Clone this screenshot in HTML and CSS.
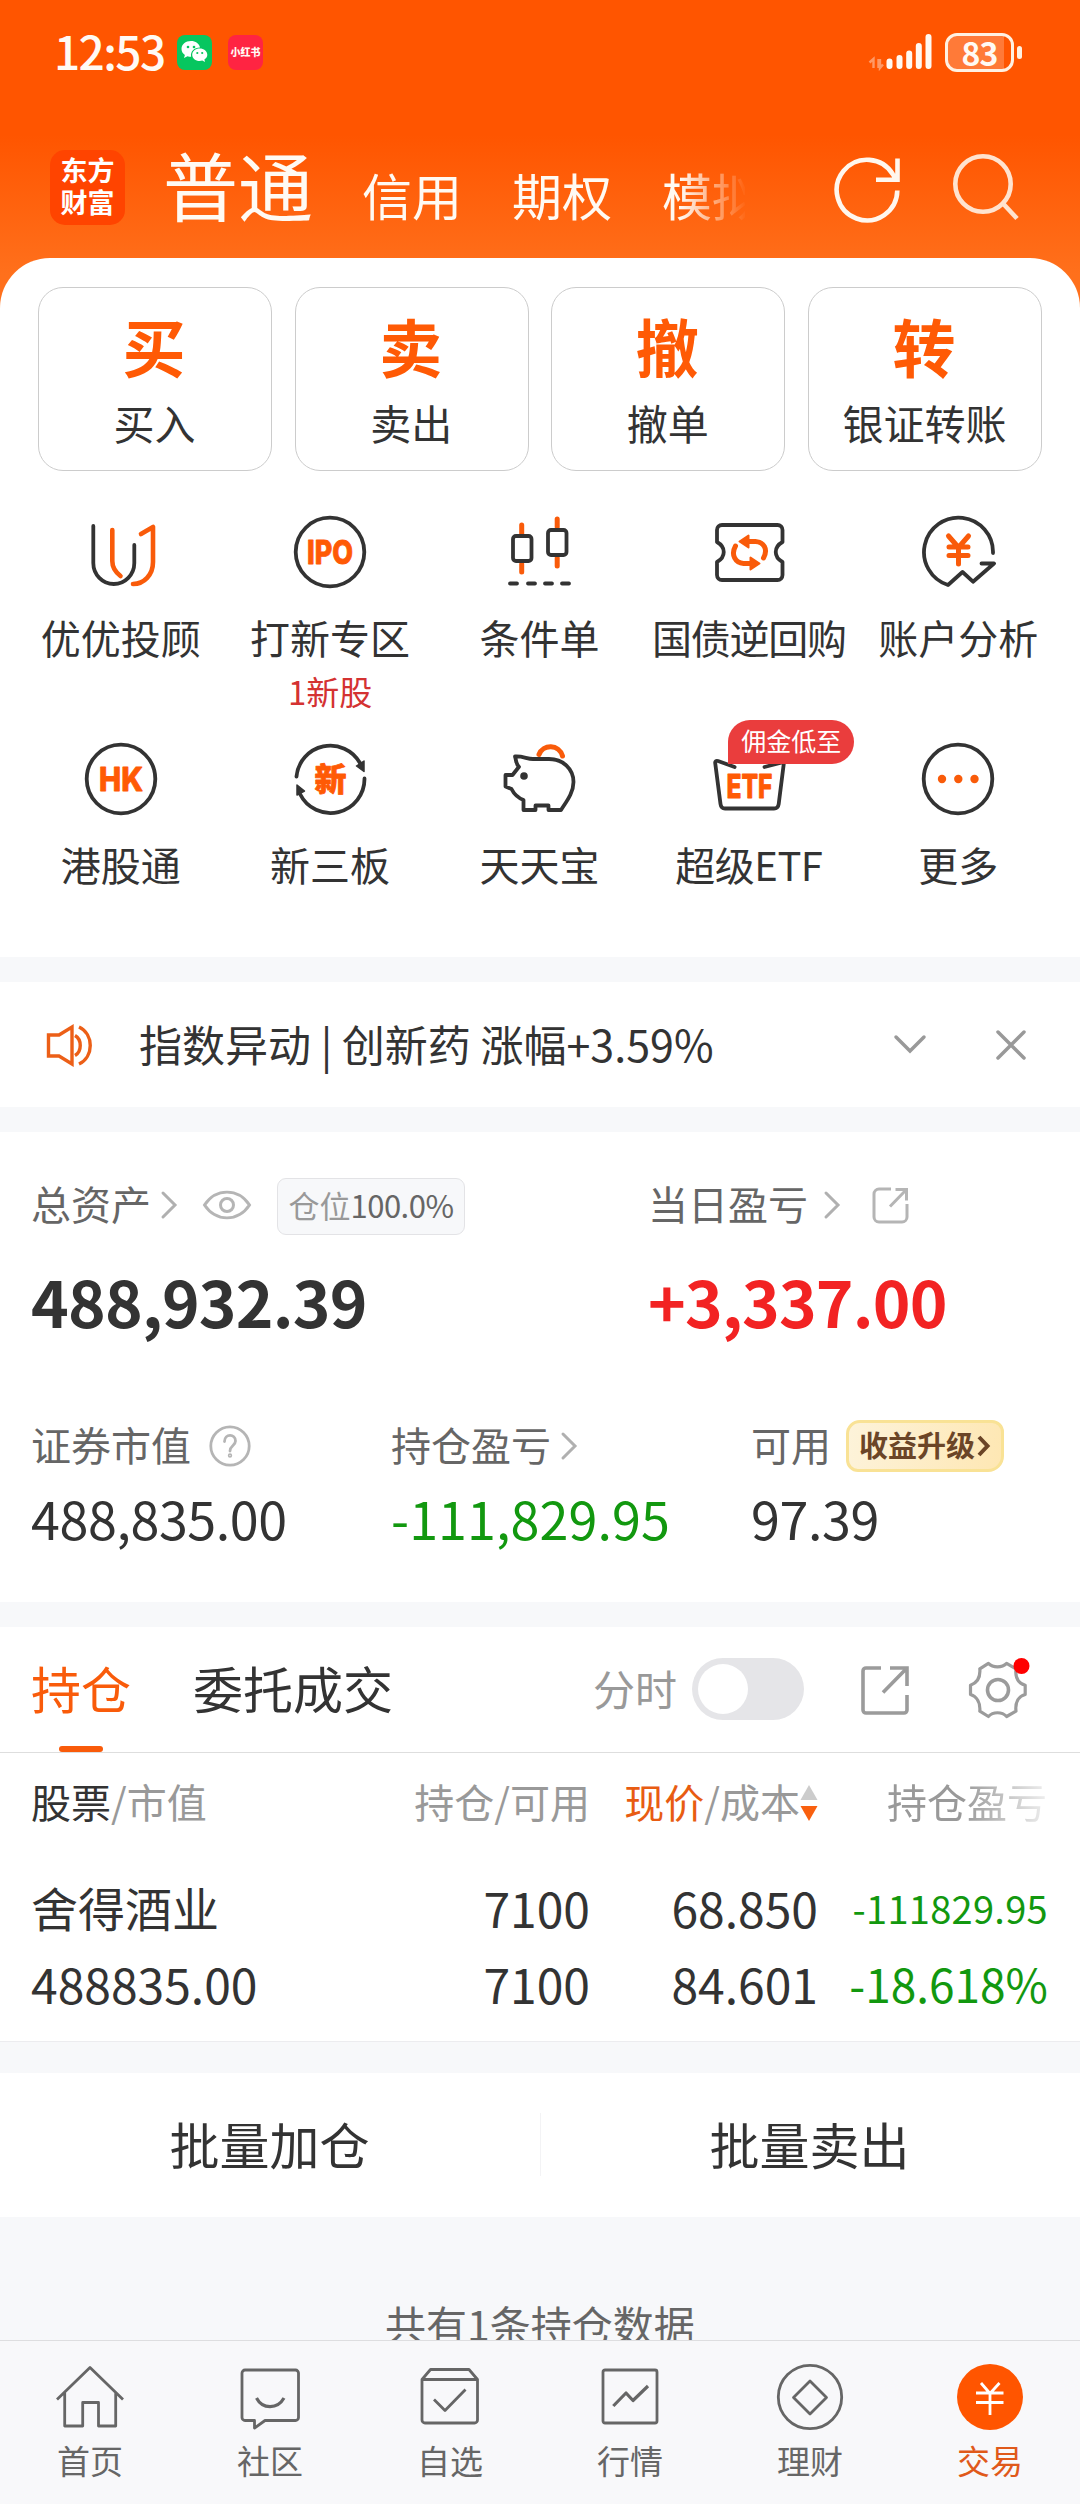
FILE: index.html
```html
<!DOCTYPE html>
<html lang="zh-CN">
<head>
<meta charset="utf-8">
<title>交易</title>
<link rel="stylesheet" href="styles.css">
</head>
<body>
<div class="top">
  <div class="status">
    <span class="t clock">12:53</span>
    <span class="app wechat"><svg width="27" height="22" viewBox="0 0 27 22"><path fill="#fff" d="M10 0C4.500 0 .5 3.500.5 8c0 2.500 1.300 4.600 3.400 6L3 17l3.500-1.800c1.200.4 2.300.5 3.600.5-1-5 3-9.200 8.900-9.200C18.200 2.600 14.500 0 10 0z"/><path fill="#fff" d="M18.700 7.500c-4.200 0-7.500 2.700-7.500 6.200s3.300 6.300 7.500 6.300c.9 0 1.800-.2 2.600-.4L24 21l-.6-2.500c1.800-1.200 2.900-2.900 2.900-4.800 0-3.500-3.400-6.200-7.600-6.200z"/><g fill="#07c65f"><circle cx="7" cy="6" r="1.300"/><circle cx="13" cy="6" r="1.300"/><circle cx="16.300" cy="12" r="1.100"/><circle cx="21.200" cy="12" r="1.100"/></g></svg></span>
    <span class="app xhs"><span class="t">小红书</span></span>
    <svg class="signal" width="66" height="38" viewBox="0 0 66 38"><g stroke="#ffffff" stroke-opacity=".4" stroke-width="2.400" fill="none"><path d="M6.500 35V26L2.500 29.500M11.500 26v9M13 26v9l3-3.500"/></g><g stroke="#fff9f2" stroke-width="6" stroke-linecap="round"><path d="M22.500 28.500v4.500M32.500 25v8M42.200 20.500v12.500M51.800 13v20M61.500 4v29"/></g></svg>
    <span class="battery"><span class="level"></span><span class="t">83</span></span><span class="knob"></span>
  </div>
  <div class="nav">
    <div class="logo"><span>东方</span><span>财富</span></div>
    <div class="markets"><span class="cur">普通</span><span>信用</span><span>期权</span><span>模拟</span></div>
    <svg class="refresh" width="72" height="72" viewBox="0 0 72 72" fill="none" stroke="#fff7ee" stroke-width="4.600"><path d="M66.300 37.500A30.300 30.300 0 1 1 62 21.500l4 6M66.500 5.500v21.300H45"/></svg>
    <svg class="search" width="72" height="72" viewBox="0 0 72 72" fill="none" stroke="#ffe3cf" stroke-width="4.600"><circle cx="34" cy="31" r="27.700"/><path d="M54 50.500L68 65.500"/></svg>
  </div>
  <div class="sheet">
    <div class="cards">
      <div class="card"><b>买</b><span>买入</span></div>
      <div class="card"><b>卖</b><span>卖出</span></div>
      <div class="card"><b>撤</b><span>撤单</span></div>
      <div class="card"><b>转</b><span>银证转账</span></div>
    </div>
    <div class="tools">
      <div class="tool"><svg viewBox="0 0 76 76"><path class="o" d="M29.300 16v31c0 7 3 11 8.200 15M58 20l12-7v35c0 13-9 22-20 22"/><path class="k" d="M10.300 12v37a20.500 21 0 0 0 41 0V31"/></svg><span class="t">优优投顾</span></div>
      <div class="tool"><svg viewBox="0 0 76 76"><circle class="k" cx="38" cy="38" r="34.300"/><text x="38" y="50" textLength="46" lengthAdjust="spacingAndGlyphs">IPO</text></svg><span class="t">打新专区</span><span class="t sub">1新股</span></div>
      <div class="tool"><svg viewBox="0 0 76 76"><path class="o w" d="M20.700 11v9M20.700 50v8M56.200 5v8M56.200 44v8"/><rect class="k" x="12" y="22" width="18.500" height="25" rx="3"/><rect class="k" x="47" y="16" width="18.500" height="25" rx="3"/><path class="k" d="M9 69.500h7M27 69.500h7M44 69.500h7M61 69.500h7"/></svg><span class="t">条件单</span></div>
      <div class="tool"><svg viewBox="0 0 76 76"><path class="k" d="M11 11h55.500a5 5 0 0 1 5 5v12c-9 5-9 15 0 20v13a5 5 0 0 1-5 5H11a5 5 0 0 1-5-5V48c9-5 9-15 0-20V16a5 5 0 0 1 5-5z"/><path class="o w" d="M24.500 32c-5 9 0 17 8 17.500h8M52.500 44c5-9 0-16-8-16.500h-8"/><path fill="#f95b0a" stroke="#f95b0a" stroke-width="2" stroke-linejoin="round" d="M28.500 27.500l9-6v12zM48.500 49.500l-9-6v12z"/></svg><span class="t tight">国债逆回购</span></div>
      <div class="tool"><svg viewBox="0 0 76 76"><path class="k" d="M73 39A34.500 34.500 0 1 0 28 71l14.500-13L53 67.700l21-18.200H61.500"/><path class="o w" d="M28.500 22l10 11.500 10-11.500M38.500 33.500v16.500M29 33h19M29 41.500h19"/></svg><span class="t">账户分析</span></div>
      <div class="tool"><svg viewBox="0 0 76 76"><circle class="k" cx="38" cy="38" r="34.300"/><text x="38" y="50" textLength="44" lengthAdjust="spacingAndGlyphs">HK</text></svg><span class="t">港股通</span></div>
      <div class="tool"><svg viewBox="0 0 76 76"><path class="k" d="M4.500 35.500A34 34 0 0 1 68 22M72.500 37.500A34 34 0 0 1 8 53"/><path fill="#333" stroke="#333" stroke-width="1.500" stroke-linejoin="round" d="M72 20v10.500l-7.500-5.500zM5 44v10l7.500-4z"/><text class="han" x="38.500" y="50">新</text></svg><span class="t">新三板</span></div>
      <div class="tool"><svg viewBox="0 0 76 76"><path class="o w" d="M38 13.500C42 3 58 3 61.500 15"/><path class="k" d="M14 15.500c1.500 4 .5 7 4 10.300L11.500 34H4.500v11.500l6 2.500c3 6 7 9 12 11v10h12v-4.500h13v4.500H60c5-8 12.500-17 12.500-28C72.500 28 62 18 48 18H32c-6 0-10-3-18-2.500z"/><circle cx="23" cy="35" r="3.800" fill="#333"/></svg><span class="t">天天宝</span></div>
      <div class="tool"><svg viewBox="0 0 76 76"><path class="k" d="M23.600 26L7 20c-2-.6-3 .3-2.800 2l5.300 41c.4 3 1.500 4.500 4.500 4.500h49c3 0 4.300-1.500 4.700-4.500L73 21l-19.500 5"/><text x="38.500" y="57" textLength="46" lengthAdjust="spacingAndGlyphs">ETF</text></svg><span class="t etf">超级ETF</span><span class="badge"><span class="t">佣金低至</span></span></div>
      <div class="tool"><svg viewBox="0 0 76 76"><circle class="k" cx="38" cy="38" r="34.300"/><g fill="#f95b0a"><circle cx="22" cy="38" r="4.200"/><circle cx="38.300" cy="38" r="4.200"/><circle cx="54.500" cy="38" r="4.200"/></g></svg><span class="t">更多</span></div>
    </div>
  </div>
</div>

<div class="notice">
  <svg width="50" height="44" viewBox="0 0 50 44" fill="none" stroke="#ec5f17" stroke-width="3.400"><path d="M3.500 12H14L27 4v37L14 33H3.500zM30 12.500c7 4 7 16 0 20M34 4c15 7 15 30 0 37"/></svg>
  <span class="t">指数异动 | 创新药 涨幅+3.59%</span>
  <svg class="down" width="36" height="36" viewBox="0 0 36 36"><path d="M4 10l14 14 14-14"/></svg>
  <svg class="close" width="36" height="36" viewBox="0 0 36 36"><path d="M5 5l26 26M31 5L5 31"/></svg>
</div>

<div class="assets">
  <div class="two labels">
    <div><span class="t">总资产</span><svg class="go" viewBox="0 0 20 30"><path d="M3 3l12 12L3 27"/></svg><svg class="eye" width="50" height="36" viewBox="0 0 50 36" fill="none" stroke="#b5b5b5" stroke-width="3"><path d="M2.500 18C14-1 36-1 47.500 18 36 37 14 37 2.500 18z" transform="translate(0 1.800) scale(1 .9)"/><circle cx="25" cy="18" r="6.500"/></svg><span class="pos"><span class="t">仓位<em>100.0%</em></span></span></div>
    <div><span class="t">当日盈亏</span><svg class="go far" viewBox="0 0 20 30"><path d="M3 3l12 12L3 27"/></svg><svg class="share" width="38" height="38" viewBox="0 0 38 38" fill="none" stroke="#b5b5b5" stroke-width="3"><path d="M20 3H8a5 5 0 0 0-5 5v23a5 5 0 0 0 5 5h23a5 5 0 0 0 5-5V18M19 20.500L35 4M24.500 3.500h11v11"/></svg></div>
  </div>
  <div class="two totals"><div><span class="t">488,932.39</span></div><div><span class="t up">+3,337.00</span></div></div>
  <div class="three labels second">
    <div><span class="t">证券市值</span><svg class="help" width="44" height="44" viewBox="0 0 44 44" fill="none" stroke="#b5b5b5" stroke-width="2.800"><circle cx="22" cy="22" r="19.200"/><path d="M16.500 17.500c0-8 11-8 11-.5 0 4.500-5.500 4.500-5.500 10" stroke-linecap="round"/><circle cx="22" cy="31.500" r=".8"/></svg></div>
    <div><span class="t">持仓盈亏</span><svg class="go" viewBox="0 0 20 30"><path d="M3 3l12 12L3 27"/></svg></div>
    <div><span class="t">可用</span><span class="gold"><span class="t">收益升级</span><svg width="14" height="22" viewBox="0 0 14 22" fill="none" stroke="#6b4527" stroke-width="4"><path d="M2 2l8.500 9L2 20"/></svg></span></div>
  </div>
  <div class="three values"><div><span class="t">488,835.00</span></div><div><span class="t down-num loss">-111,829.95</span></div><div><span class="t">97.39</span></div></div>
</div>

<div class="holdings">
  <div class="tabs">
    <span class="tab on"><span class="t">持仓</span></span>
    <span class="tab"><span class="t">委托成交</span></span>
    <span class="t mode">分时</span>
    <span class="toggle"><i></i></span>
    <svg class="export" width="52" height="52" viewBox="0 0 52 52" fill="none" stroke="#9b9b9b" stroke-width="3.600"><path d="M22 4H7a3 3 0 0 0-3 3v39a3 3 0 0 0 3 3h38a3 3 0 0 0 3-3V31M24 28.500L47 5M31 4h17v18"/></svg>
    <svg class="gear" width="64" height="64" viewBox="0 0 64 64"><g fill="none" stroke="#9b9b9b" stroke-linejoin="round"><path stroke-width="3.200" d="M22.400 5.300C27 10 36 10 40.600 5.300L50 10.800C49 19 52 25 59.200 27.200V36.500C52 38.500 49 45 50 53.200L40.600 58.500C36 53.500 27 53.500 22.400 58.500L13.800 53.200C14.500 45 11 38.500 4.500 36.500V27.200C11 25 14.500 19 13.800 10.800z"/><circle cx="32" cy="32" r="10.500" stroke-width="3.600"/></g><circle cx="55.500" cy="8" r="8" fill="#f00"/></svg>
  </div>
  <div class="grid head">
    <span class="t"><em>股票</em>/市值</span>
    <span class="t">持仓/可用</span>
    <span class="price"><span class="t"><em>现价</em>/成本</span><svg width="18" height="38" viewBox="0 0 18 38"><path fill="#ccc" d="M9 1l8.500 15H.5z"/><path fill="#f9600f" d="M9 37l8.500-15H.5z"/></svg></span>
    <span class="t fade">持仓盈亏</span>
  </div>
  <div class="grid row first"><span class="t name">舍得酒业</span><span class="t">7100</span><span class="t">68.850</span><span class="t small down-num">-111829.95</span></div>
  <div class="grid row"><span class="t">488835.00</span><span class="t">7100</span><span class="t">84.601</span><span class="t pct down-num">-18.618%</span></div>
</div>

<div class="actions"><div><span class="t">批量加仓</span></div><div><span class="t">批量卖出</span></div></div>
<div class="note"><span>共有1条持仓数据</span></div>

<div class="bar">
  <div><svg viewBox="0 0 72 72"><path d="M3 38.500L36 6.500l33 32M10.700 31v34h18V41.500h15.800V65h17.200V31"/></svg><span>首页</span></div>
  <div><svg viewBox="0 0 72 72"><path d="M20.500 59.500H11a3 3 0 0 1-3-3V12a3 3 0 0 1 3-3h50.500a3 3 0 0 1 3 3v44.500a3 3 0 0 1-3 3H31L20.500 67z"/><path d="M22.500 37c6 11.500 21 11.500 27.500 0" stroke-width="3.200"/></svg><span>社区</span></div>
  <div><svg viewBox="0 0 72 72"><path d="M8 18.500L16.500 8.500h38.500l8.500 10V59a3 3 0 0 1-3 3H11a3 3 0 0 1-3-3zM8 18.500h55.500M20 38.500l11 11 20.500-21"/></svg><span>自选</span></div>
  <div><svg viewBox="0 0 72 72"><rect x="9" y="9" width="54" height="53" rx="2"/><path d="M19.300 45L32 32l7 7.500L54 25" stroke-width="3.200"/></svg><span>行情</span></div>
  <div><svg viewBox="0 0 72 72"><circle cx="36" cy="36" r="31.700"/><path d="M36 20l16.500 16.500L36 53 19.500 36.500z"/></svg><span>理财</span></div>
  <div class="on"><svg viewBox="0 0 72 72"><circle cx="36" cy="36" r="33" fill="#ff5500" stroke="none"/><path stroke="#fff" d="M27 22l9 10.500L45.500 22M22 32h27.500M22 41.500h27.500M36 32v22"/></svg><span>交易</span></div>
</div>
</body>
</html>
```

FILE: styles.css
```css
* { box-sizing: border-box; }
body {
  margin: 0;
  width: 1080px;
  background: #f7f8fa;
  color: #333;
  font-family: "Noto Sans CJK SC", "Noto Sans", sans-serif;
  font-size: 40px;
  line-height: 1;
}
em, i { font-style: normal; }
svg { display: block; flex: none; }

/* single text line whose glyphs sit on the vertical centre of its box */
.t { display: block; padding-bottom: .09em; white-space: nowrap; }

.top { background: linear-gradient(#ff5500 0, #ff5500 135px, #ff701c 275px); }

/* status bar */
.status { display: flex; align-items: center; height: 104px; padding-left: 54px; color: #fffaf4; }
.clock { font-size: 46px; font-weight: 500; letter-spacing: -1.600px; width: 123px; }
.app { display: flex; align-items: center; justify-content: center; width: 35px; height: 35px; border-radius: 8px; }
.wechat { background: #07c65f; }
.xhs { background: #ff2442; margin-left: 16px; font-size: 10px; font-weight: 900; }
.signal { margin: 0 12px 0 auto; }
.battery { position: relative; display: flex; align-items: center; justify-content: center; width: 69px; height: 39px; border: 3px solid #fff1e2; border-radius: 12px; font-size: 32px; font-weight: 700; letter-spacing: -1px; }
.battery .t { position: relative; padding-bottom: 1px; }
.level { position: absolute; left: 0; top: 0; bottom: 0; width: 56px; border-radius: 8px 0 0 8px; background: rgba(255, 255, 255, .22); }
.knob { width: 5px; height: 13px; margin: 0 58px 0 3px; border-radius: 3px; background: #fff1e2; }

/* account type header */
.nav { display: flex; height: 154px; padding-left: 50px; }
.logo { width: 75px; height: 75px; margin-top: 46px; padding-top: 4px; border-radius: 15px; background: #ff4400; color: #fff; font-size: 27px; font-weight: 700; line-height: 32px; text-align: center; }
.logo span { display: block; height: 32px; }
.markets { display: flex; align-items: baseline; width: 620px; padding: 42px 0 0 38px; color: #fffaf3; font-size: 50px; line-height: 1.200; white-space: nowrap; -webkit-mask-image: linear-gradient(90deg, #000 555px, transparent 622px); mask-image: linear-gradient(90deg, #000 555px, transparent 622px); }
.markets span { margin-right: 50px; }
.markets .cur { font-size: 75px; line-height: 1; margin-right: 49px; }
.refresh { margin: 49px 0 0 86px; }
.search { margin: 49px 0 0 46px; }

/* main sheet */
.sheet { height: 699px; padding-top: 29px; border-radius: 50px 50px 0 0; background: #fff; }
.cards { display: grid; grid-template-columns: repeat(4, 1fr); gap: 22.500px; padding: 0 38px; }
.card { display: flex; flex-direction: column; align-items: center; height: 184px; padding: 25px 1px 0 0; border: 1px solid #ccc; border-radius: 25px; }
.card b { margin-right: 1px; color: #ff5a05; font-size: 63px; height: 72px; }
.card span { margin-top: 17px; font-size: 41px; }
.tools { display: grid; grid-template-columns: repeat(5, 1fr); grid-auto-rows: 227px; margin: 43px 17px 0 16px; }
.tool { position: relative; display: flex; flex-direction: column; align-items: center; }
.tool svg { width: 76px; height: 76px; margin-bottom: 27px; }
.tool .k, .tool .o { fill: none; stroke: #333; stroke-width: 3.800; stroke-linecap: round; stroke-linejoin: round; }
.tool .o { stroke: #f95b0a; stroke-width: 4.600; }
.tool .w { stroke-width: 5; }
.tool text { fill: #ff5a05; stroke: #ff5a05; stroke-width: .8px; stroke-linejoin: round; font-family: Inter, "Noto Sans CJK SC", sans-serif; font-size: 32px; font-weight: 800; text-anchor: middle; }
.tool .han { font-family: "Noto Sans CJK SC", sans-serif; }
.tool .sub { margin-top: 14px; color: #d43232; font-size: 33px; }
.tool .tight { letter-spacing: -1.200px; }
.tool .etf { letter-spacing: -.5px; }
.badge { position: absolute; left: 84px; top: -21px; width: 126px; height: 44px; display: flex; align-items: center; justify-content: center; border-radius: 22px 22px 22px 0; background: #ea3d3d; color: #fff; font-size: 25px; }

/* notice strip */
.notice { display: flex; align-items: center; height: 125px; margin-top: 25px; padding-left: 45px; background: #fff; font-size: 43px; }
.notice > .t { margin-left: 44px; width: 753px; padding-bottom: .04em; }
.notice .down, .notice .close { fill: none; stroke: #999; stroke-width: 3.500; stroke-linecap: round; }
.notice .close { margin-left: 65px; }

/* assets */
.assets { height: 470px; margin-top: 25px; padding: 43px 0 0 31px; background: #fff; }
.two, .three { display: grid; height: 60px; }
.two { grid-template-columns: 617px 1fr; }
.three { grid-template-columns: 360px 360px 1fr; }
.two > div, .three > div { display: flex; align-items: center; }
.labels { color: #666; }
.go { width: 20px; height: 30px; margin-left: 9px; fill: none; stroke: #b0b0b0; stroke-width: 3; stroke-linecap: round; }
.go.far { margin-left: 15px; }
.eye { margin-left: 22px; }
.pos { display: flex; align-items: center; justify-content: center; width: 188px; height: 57px; margin: 2px 0 0 25px; border: 1px solid #e3e3e6; border-radius: 9px; background: #f7f8fa; color: #999; font-size: 31px; }
.pos em { color: #666; letter-spacing: -.5px; }
.share { margin-left: 28px; }
.totals { height: 100px; margin-top: 19px; font-size: 64px; font-weight: 700; letter-spacing: -.8px; }
.totals .t, .values .t { padding-bottom: .11em; }
.up { color: #f22323; }
.second { margin-top: 62px; }
.help { margin-left: 17px; }
.gold { display: flex; align-items: center; width: 158px; height: 52px; margin-left: 15px; padding-left: 10px; border: 3px solid #f9e295; border-radius: 14px 12px 16px 12px; background: linear-gradient(100deg, #fdf3da, #fee7b3); color: #6b4527; font-size: 29px; font-weight: 700; }
.gold svg { margin-left: 2px; }
.values { margin-top: 15px; font-size: 52px; letter-spacing: -.4px; }
.values .loss { letter-spacing: .1px; }
.down-num { color: #12980f; }

/* holdings */
.holdings { height: 415px; margin-top: 25px; border-bottom: 1px solid #ececef; background: #fff; }
.tabs { display: flex; align-items: center; height: 126px; padding-left: 31px; border-bottom: 1px solid #dedede; font-size: 50px; }
.tab { position: relative; display: flex; align-items: center; height: 125px; margin-right: 62px; }
.tab.on { color: #f95b0a; }
.tab.on::after { content: ""; position: absolute; left: 28px; bottom: 0; width: 44px; height: 6px; border-radius: 3px; background: #f95b0a; }
.mode { margin-left: 138px; color: #999; font-size: 42px; }
.toggle { width: 112px; height: 62px; margin: -2px 0 0 15px; padding: 6px; border-radius: 31px; background: #e5e5e8; }
.toggle i { display: block; width: 50px; height: 50px; border-radius: 50%; background: #fff; }
.export { margin-left: 55px; }
.gear { margin-left: 55px; }
.grid { display: grid; grid-template-columns: 281px 278px 228px 230px; align-items: center; height: 76px; padding-left: 31px; font-size: 48px; text-align: right; }
.grid > :first-child { text-align: left; }
.grid.head { height: 100px; color: #999; font-size: 40px; }
.grid.head .t { padding-bottom: .12em; }
.head em { color: #333; }
.price { display: flex; align-items: center; justify-content: flex-end; }
.head .price em { color: #e85c12; }
.head .fade { padding-right: 1px; -webkit-mask-image: linear-gradient(90deg, #000 145px, transparent 245px); mask-image: linear-gradient(90deg, #000 145px, transparent 245px); }
.first { margin-top: 19px; }
.row .t { padding-bottom: .14em; }
.row .name { font-size: 47px; padding-bottom: .14em; }
.row .small { font-size: 38px; letter-spacing: .3px; padding-bottom: .1em; }
.row .pct { font-size: 46px; }

/* batch actions */
.actions { display: grid; grid-template-columns: 1fr 1fr; height: 144px; margin-top: 31px; background: #fff; font-size: 50px; }
.actions div { display: flex; align-items: center; justify-content: center; }
.actions .t { padding-right: 1px; }
.actions div + div { background: linear-gradient(#f3f3f5, #f3f3f5) 0 40px / 1px 63px no-repeat; }
.note { height: 123px; padding-top: 86px; overflow: hidden; color: #666; font-size: 41px; text-align: center; }

/* bottom bar */
.bar { display: grid; grid-template-columns: repeat(6, 1fr); height: 164px; border-top: 1px solid #dedee0; background: #f8f8fa; color: #666; font-size: 33px; text-align: center; }
.bar svg { width: 72px; height: 72px; margin: 20px auto 11px; fill: none; stroke: #666; stroke-width: 2.800; stroke-linejoin: round; }
.bar .on { color: #e0591a; }
```
